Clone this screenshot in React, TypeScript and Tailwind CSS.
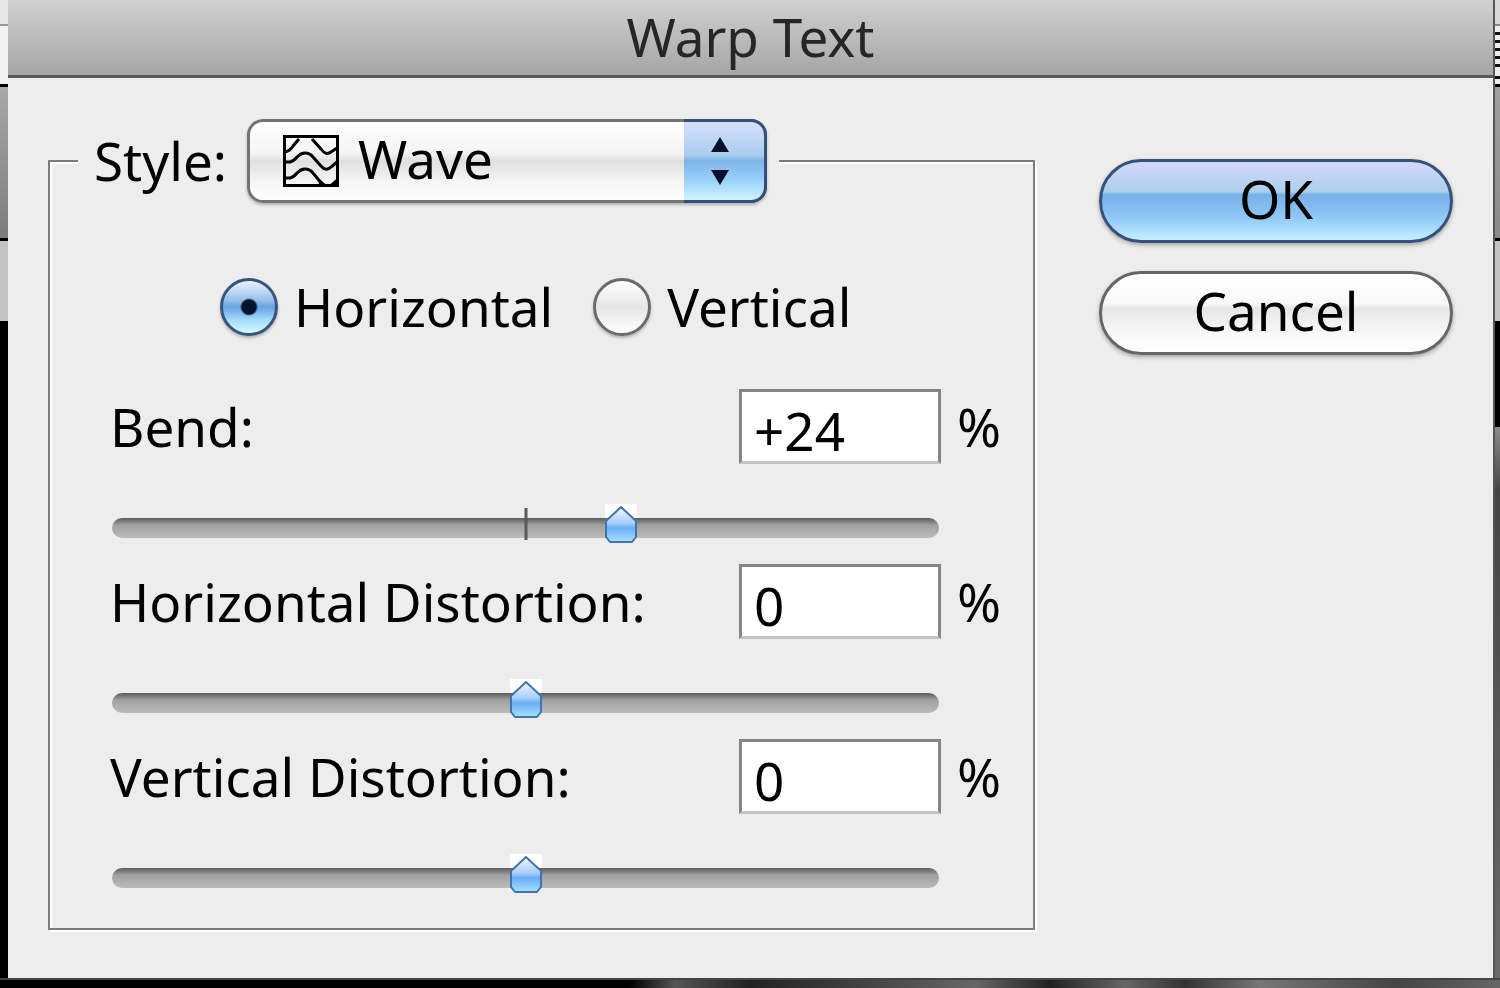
import React, { useState } from 'react';

const MIN = -100;
const MAX = 100;

/** Thumbnail of the wave warp, shown in the style menu. */
function WaveIcon({ className = '' }: { className?: string }) {
  return (
    <svg viewBox="0 0 56 52" className={className} fill="none" stroke="#000" aria-hidden="true">
      <rect x="1.5" y="1.5" width="53" height="49" strokeWidth="3" />
      <path d="M2 17Q7 16 10 11L16 4M29 4L38 14Q43 21 48 17L54 13" strokeWidth="3" />
      <path d="M2 27H7Q11 26 14 22Q18 18 22 18Q27 18 30 22L38 31Q43 37 48 32L54 27" strokeWidth="3" />
      <path d="M2 43H7Q11 42 14 38Q18 34 22 34Q27 34 30 38L39 49" strokeWidth="3" />
      <path d="M36 50l1-5 6 5zM47 50l8-7v7z" fill="#000" strokeWidth="1" />
    </svg>
  );
}

function Thumb() {
  return (
    <svg viewBox="0 0 36 40" className="h-10 w-9" aria-hidden="true">
      <defs>
        <linearGradient id="thumb" x1="0" y1="0" x2="0" y2="1">
          <stop offset="0" stopColor="#f4f7ff" />
          <stop offset="0.45" stopColor="#a9cffa" />
          <stop offset="0.6" stopColor="#6aaef4" />
          <stop offset="1" stopColor="#a5e2ff" />
        </linearGradient>
      </defs>
      <path d="M2 0h32v14H2z" fill="#fff" />
      <path
        d="M18 3L33 17V33L29 38H7L3 33V17Z"
        fill="url(#thumb)"
        stroke="#4373ae"
        strokeWidth="2"
        strokeLinejoin="round"
      />
    </svg>
  );
}

function PercentField({
  id,
  label,
  value,
  signed = false,
  onChange,
}: {
  id: string;
  label: string;
  value: number;
  signed?: boolean;
  onChange: (value: number) => void;
}) {
  const text = signed && value > 0 ? `+${value}` : `${value}`;
  const ratio = (value - MIN) / (MAX - MIN);

  return (
    <div>
      <div className="flex h-[75px] items-center gap-4">
        <label htmlFor={id} className="flex-1 whitespace-nowrap">
          {label}
        </label>
        <input
          id={id}
          type="text"
          value={text}
          onChange={(e) => onChange(Math.max(MIN, Math.min(MAX, Number(e.target.value) || 0)))}
          className="h-full w-[202px] rounded-none border-3 border-[#858585] border-b-[#c4c4c4] bg-white px-3 pt-2 outline-none"
        />
        <span className="w-10">%</span>
      </div>

      {/* Track with the pointed thumb riding on top */}
      <div className="relative mt-10 mr-14 flex h-10 items-center">
        <input
          type="range"
          aria-label={`${label} slider`}
          min={MIN}
          max={MAX}
          value={value}
          onChange={(e) => onChange(Number(e.target.value))}
          className="mx-0.5 mt-2 h-5 w-full appearance-none rounded-full bg-linear-to-b from-[#5c5c5c] via-[#a0a0a0] via-35% to-[#bcbcbc] outline-none [&::-webkit-slider-thumb]:h-10 [&::-webkit-slider-thumb]:w-9 [&::-webkit-slider-thumb]:appearance-none [&::-webkit-slider-thumb]:bg-transparent"
        />
        {signed && (
          <span className="pointer-events-none absolute top-1 left-1/2 h-8 w-[3px] -translate-x-1/2 bg-[#5a5a5a]" />
        )}
        <span
          className="pointer-events-none absolute top-0"
          style={{ left: `calc((100% - 36px) * ${ratio})` }}
        >
          <Thumb />
        </span>
      </div>
    </div>
  );
}

function RadioOption({
  label,
  checked,
  onChange,
}: {
  label: string;
  checked: boolean;
  onChange: () => void;
}) {
  return (
    <label className="flex items-center gap-4">
      <input
        type="radio"
        name="orientation"
        checked={checked}
        onChange={onChange}
        className="size-[58px] appearance-none rounded-full border-3 border-[#6b6b6b] bg-linear-to-b from-white via-[#e6e6e6] to-white shadow-[0_2px_3px_#00000040] checked:border-[#38547c] checked:bg-[radial-gradient(circle_at_center,#06142c_0_7px,transparent_9px),linear-gradient(to_bottom,#eef3ff,#9dc3ec_35%,#66a3e2_50%,#a4dcfb_75%,#d4fbff)]"
      />
      <span>{label}</span>
    </label>
  );
}

export default function App() {
  const [style, setStyle] = useState('Wave');
  const [orientation, setOrientation] = useState('Horizontal');
  const [bend, setBend] = useState(24);
  const [horizontal, setHorizontal] = useState(0);
  const [vertical, setVertical] = useState(0);

  return (
    <div className="flex min-h-screen flex-col bg-black font-['Noto_Sans','Open_Sans',sans-serif] text-[53px] leading-[60px] text-black">
      <div className="flex flex-1">
        {/* Sliver of the document window behind the dialog */}
        <div className="w-2 bg-[linear-gradient(to_bottom,#e8e8e8_0_24px,#999_24px_26px,#f2f2f2_26px_84px,#000_84px_87px,#a8a8a8_87px,#7c7c7c_238px,#000_238px_241px,#c4c4c4_241px_321px,#000_321px)]" />

        <div className="flex flex-1 flex-col bg-[#ededed]">
          <header className="flex h-[78px] items-center justify-center border-b-3 border-[#595959] bg-linear-to-b from-[#d0d0d0] to-[#a6a6a6] pb-0.5">
            <h1 className="text-[#262626]">Warp Text</h1>
          </header>

          <main className="flex flex-1 items-start gap-16 px-10 pt-[41px] pb-[46px]">
            <fieldset className="flex-1 border-2 border-[#7d7d7d] px-7 pb-[34px] shadow-[2px_2px_0_#fff,inset_2px_2px_0_#fff]">
              <legend className="bg-[#ededed] pr-3 pl-4">
                <div className="flex items-center gap-5">
                  <label htmlFor="style">Style:</label>
                  <div className="relative">
                    <select
                      id="style"
                      value={style}
                      onChange={(e) => setStyle(e.target.value)}
                      className="block h-[84px] w-[520px] appearance-none rounded-2xl border-3 border-[#737373] bg-[linear-gradient(to_bottom,#fff,#f4f4f4_40%,#dfdfdf_50%,#f4f4f4_75%,#fff)] pb-1 pl-[108px] shadow-[0_2px_3px_#00000040] outline-none"
                    >
                      <option>Wave</option>
                      <option>Flag</option>
                      <option>Arc</option>
                    </select>
                    <WaveIcon className="pointer-events-none absolute top-4 left-9 h-[52px] w-14" />
                    <span className="pointer-events-none absolute top-0 right-0 flex h-full w-[83px] flex-col items-center justify-center rounded-r-2xl border-y-3 border-r-3 border-[#354f78] bg-[linear-gradient(to_bottom,#d8e0fa,#a9cdf0_42%,#7db4e8_50%,#9bd2fa_75%,#d0f4ff)] pr-2">
                      <svg viewBox="0 0 18 48" className="h-12 w-[18px]" fill="#06102c" aria-hidden="true">
                        <path d="M9 0L18 15H0ZM9 48L0 33H18Z" />
                      </svg>
                    </span>
                  </div>
                </div>
              </legend>

              <div className="pt-[74px] pr-2 pl-8">
                <div className="flex gap-10 pl-[110px]">
                  <RadioOption
                    label="Horizontal"
                    checked={orientation === 'Horizontal'}
                    onChange={() => setOrientation('Horizontal')}
                  />
                  <RadioOption
                    label="Vertical"
                    checked={orientation === 'Vertical'}
                    onChange={() => setOrientation('Vertical')}
                  />
                </div>

                <div className="mt-[52px] flex flex-col gap-5">
                  <PercentField id="bend" label="Bend:" value={bend} signed onChange={setBend} />
                  <PercentField
                    id="horizontal-distortion"
                    label="Horizontal Distortion:"
                    value={horizontal}
                    onChange={setHorizontal}
                  />
                  <PercentField
                    id="vertical-distortion"
                    label="Vertical Distortion:"
                    value={vertical}
                    onChange={setVertical}
                  />
                </div>
              </div>
            </fieldset>

            <div className="flex w-[354px] flex-col gap-7 pt-10">
              <button
                type="button"
                className="h-[84px] rounded-full border-3 border-[#38507c] bg-[linear-gradient(to_bottom,#d3d8fa,#acd0ec_38%,#78b0e6_42%,#8fc6f7_70%,#c4f0ff)] pb-1 shadow-[0_2px_4px_#00000050]"
              >
                OK
              </button>
              <button
                type="button"
                className="h-[84px] rounded-full border-3 border-[#666] bg-[linear-gradient(to_bottom,#fff,#f8f8f8_38%,#e6e6e6_44%,#f8f8f8_75%,#fff)] pb-1 shadow-[0_2px_4px_#00000050]"
              >
                Cancel
              </button>
            </div>
          </main>
        </div>

        <div className="w-[7px] border-l-2 border-[#555] bg-[linear-gradient(to_bottom,#d8d8d8_0_24px,#888_24px_26px,#eee_26px_32px,#111_32px_35px,#eee_35px_40px,#111_40px_43px,#eee_43px_48px,#111_48px_51px,#eee_51px_56px,#111_56px_59px,#eee_59px_64px,#111_64px_67px,#eee_67px_76px,#111_76px_79px,#eee_79px_84px,#000_84px_87px,#a0a0a0_87px,#8a8a8a_238px,#000_238px_241px,#c4c4c4_241px_321px,#000_321px_427px,#8c8c8c_427px,#444_490px,#6a6a6a)]" />
      </div>

      <div className="h-[10px] border-t-2 border-[#444] bg-[linear-gradient(to_right,#000_42%,#555_45%,#222_50%,#444_58%,#666_65%,#222_70%,#666_75%,#333_79%,#777_84%,#444_93%,#666)]" />
    </div>
  );
}
